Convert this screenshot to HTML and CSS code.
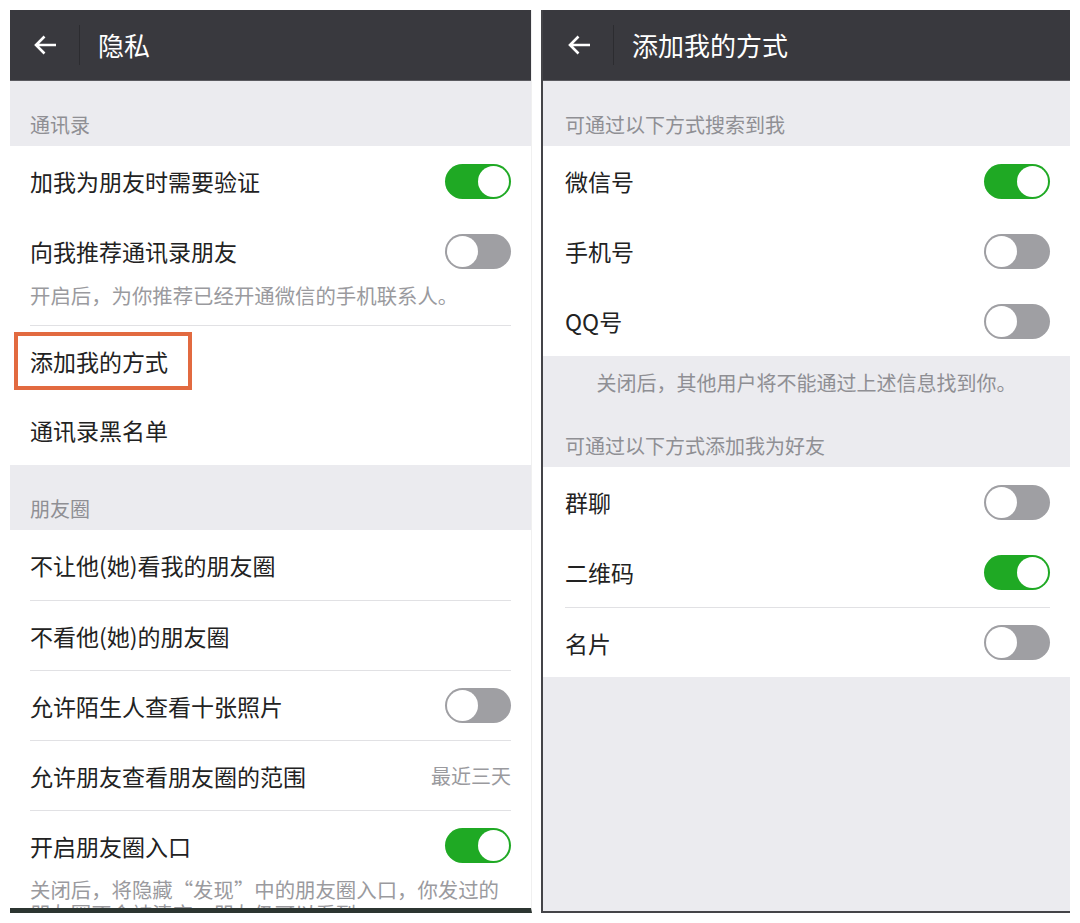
FILE: index.html
```html
<!DOCTYPE html>
<html lang="zh-CN">
<head>
<meta charset="utf-8">
<title>隐私 / 添加我的方式</title>
<link rel="stylesheet" href="styles.css">
</head>
<body>
<div class="screens">
  <section class="panel panel-left">
    <header class="topbar">
      <svg class="back" viewBox="0 0 24 22" width="24" height="22"><path d="M23 11 H3 M11.5 2.5 L3 11 L11.5 19.5" fill="none" stroke="#fff" stroke-width="2.6"/></svg>
      <span class="sep"></span>
      <span class="title">隐私</span>
    </header>
    <div class="group-title">通讯录</div>
    <div class="row"><span class="label">加我为朋友时需要验证</span><span class="switch on"></span></div>
    <div class="row-block">
      <div class="row"><span class="label">向我推荐通讯录朋友</span><span class="switch"></span></div>
      <p class="desc">开启后，为你推荐已经开通微信的手机联系人。</p>
    </div>
    <div class="row divided highlight-row"><span class="label">添加我的方式</span><span class="highlight"></span></div>
    <div class="row"><span class="label">通讯录黑名单</span></div>
    <div class="group-title">朋友圈</div>
    <div class="row"><span class="label">不让他(她)看我的朋友圈</span></div>
    <div class="row divided"><span class="label">不看他(她)的朋友圈</span></div>
    <div class="row divided"><span class="label">允许陌生人查看十张照片</span><span class="switch"></span></div>
    <div class="row divided"><span class="label">允许朋友查看朋友圈的范围</span><span class="value">最近三天</span></div>
    <div class="row-block">
      <div class="row divided"><span class="label">开启朋友圈入口</span><span class="switch on"></span></div>
      <p class="desc">关闭后，将隐藏“发现”中的朋友圈入口，你发过的<br>朋友圈不会被清空，朋友仍可以看到。</p>
    </div>
  </section>

  <section class="panel panel-right">
    <header class="topbar">
      <svg class="back" viewBox="0 0 24 22" width="24" height="22"><path d="M23 11 H3 M11.5 2.5 L3 11 L11.5 19.5" fill="none" stroke="#fff" stroke-width="2.6"/></svg>
      <span class="sep"></span>
      <span class="title">添加我的方式</span>
    </header>
    <div class="group-title">可通过以下方式搜索到我</div>
    <div class="row"><span class="label">微信号</span><span class="switch on"></span></div>
    <div class="row"><span class="label">手机号</span><span class="switch"></span></div>
    <div class="row"><span class="label">QQ号</span><span class="switch"></span></div>
    <p class="note">关闭后，其他用户将不能通过上述信息找到你。</p>
    <div class="group-title tall">可通过以下方式添加我为好友</div>
    <div class="row"><span class="label">群聊</span><span class="switch"></span></div>
    <div class="row"><span class="label">二维码</span><span class="switch on"></span></div>
    <div class="row divided"><span class="label">名片</span><span class="switch"></span></div>
  </section>
</div>
</body>
</html>
```

FILE: styles.css
```css
* { box-sizing: border-box; }
html, body { margin: 0; padding: 0; }
body {
  width: 1080px;
  height: 923px;
  background: #ffffff;
  font-family: "Noto Sans CJK SC", "Noto Sans", sans-serif;
  color: #222222;
  overflow: hidden;
}
.screens {
  display: flex;
  align-items: flex-start;
  padding: 10px 0 0 10px;
  gap: 9px;
}
.panel {
  display: flex;
  flex-direction: column;
  height: 903px;
  overflow: hidden;
}
.panel-left {
  width: 522px;
  background: #ffffff;
  border-bottom: 5px solid #2c3531;
  border-right: 1px solid #f0f0f0;
}
.panel-right {
  width: 529px;
  background: #ebebef;
  border-left: 2px solid #444448;
  border-bottom: 2px solid #444448;
}
.topbar {
  flex: none;
  height: 71px;
  background: #39393e;
  border-bottom: 1px solid #5a5a5f;
  display: flex;
  align-items: center;
  padding-left: 23px;
}
.panel-right .topbar { padding-left: 24px; }
.back { flex: none; display: block; }
.sep {
  flex: none;
  width: 1px;
  height: 40px;
  margin-left: 22px;
  background: #2c2c30;
}
.title {
  margin-left: 18px;
  font-size: 26px;
  line-height: 30px;
  color: #ffffff;
}
.group-title {
  flex: none;
  height: 65px;
  background: #ebebef;
  display: flex;
  align-items: flex-end;
  padding: 0 20px 10px;
  font-size: 20px;
  line-height: 22px;
  color: #8f8f94;
}
.panel-right .group-title { padding-left: 22px; }
.group-title.tall { height: 72px; }
.row {
  flex: none;
  position: relative;
  height: 70px;
  background: #ffffff;
  display: flex;
  align-items: center;
  justify-content: space-between;
  padding: 0 20px;
}
.panel-right .row { padding: 0 20px 0 22px; }
.row.divided::before {
  content: "";
  position: absolute;
  top: 0;
  left: 20px;
  right: 20px;
  height: 1px;
  background: #e1e1e4;
}
.panel-right .row.divided::before { left: 22px; }
.row.divided { padding-top: 1px; }
.label {
  font-size: 23px;
  line-height: 30px;
  color: #222222;
  white-space: nowrap;
}
.value {
  font-size: 20px;
  line-height: 24px;
  color: #9a9a9e;
}
.row-block {
  flex: none;
  background: #ffffff;
  padding-bottom: 18px;
}
.desc {
  margin: -3px 0 0;
  padding: 0 20px;
  font-size: 20.4px;
  line-height: 24px;
  color: #9a9a9e;
  white-space: nowrap;
}
.note {
  flex: none;
  margin: 0;
  padding-top: 15px;
  font-size: 20px;
  line-height: 24px;
  color: #8f8f94;
  text-align: center;
}
.switch {
  flex: none;
  position: relative;
  width: 66px;
  height: 35px;
  border-radius: 18px;
  background: #9f9fa3;
}
.switch::after {
  content: "";
  position: absolute;
  top: 2px;
  left: 2px;
  width: 31px;
  height: 31px;
  border-radius: 50%;
  background: #ffffff;
}
.switch.on { background: #1fa924; }
.switch.on::after { left: 33px; }
.highlight {
  position: absolute;
  top: 7px;
  left: 4px;
  width: 178px;
  height: 58px;
  border: 4px solid #e26a40;
  pointer-events: none;
}
```
